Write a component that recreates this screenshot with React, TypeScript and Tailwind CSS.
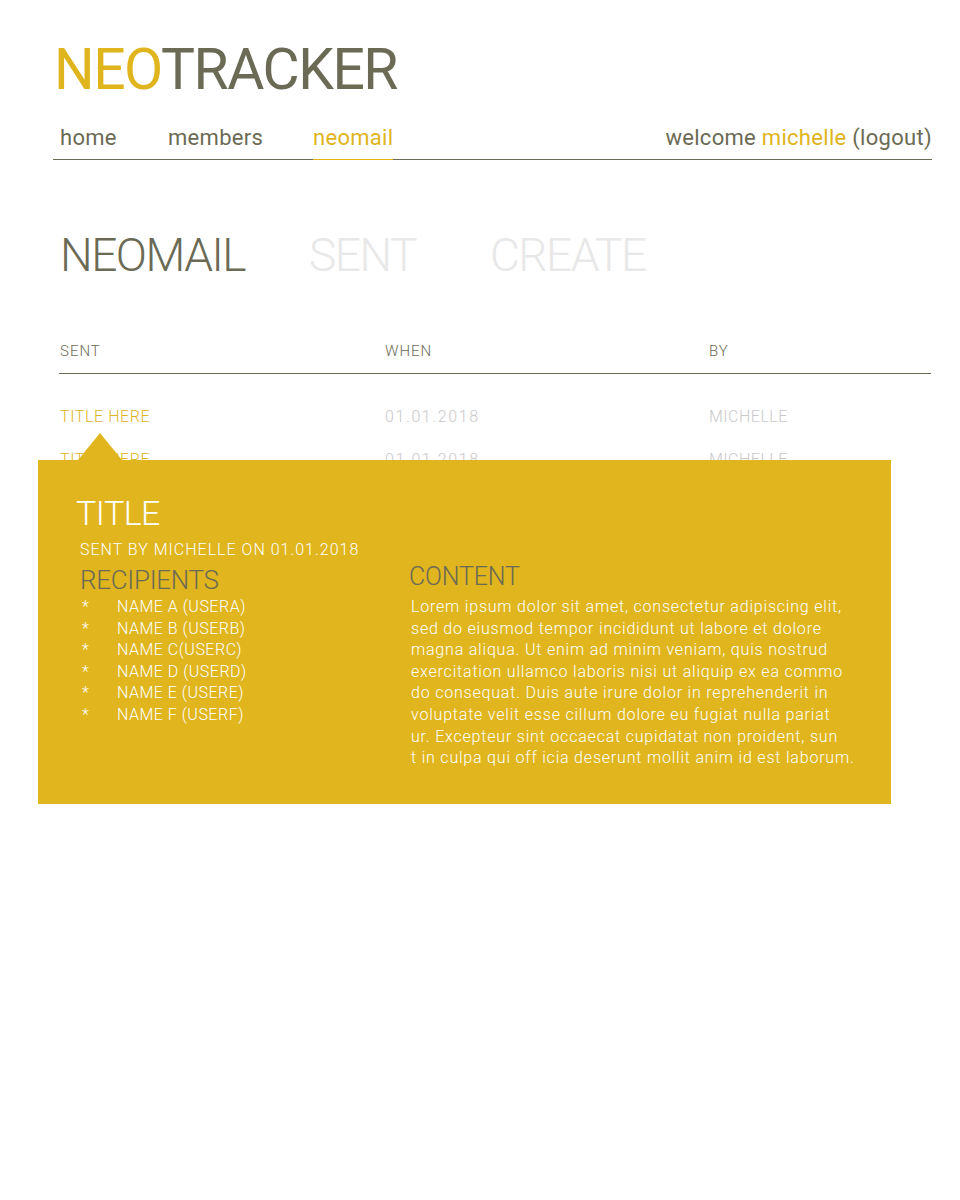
import React from "react";

const GOLD = "text-[#e0b41c]";

const rows = [
  { title: "TITLE HERE", when: "01.01.2018", by: "MICHELLE" },
  { title: "TITLE HERE", when: "01.01.2018", by: "MICHELLE" },
];

const recipients = [
  "NAME A (USERA)",
  "NAME B (USERB)",
  "NAME C(USERC)",
  "NAME D (USERD)",
  "NAME E (USERE)",
  "NAME F (USERF)",
];

const contentLines = [
  "Lorem ipsum dolor sit amet, consectetur adipiscing elit,",
  "sed do eiusmod tempor incididunt ut labore et dolore",
  "magna aliqua. Ut enim ad minim veniam, quis nostrud",
  "exercitation ullamco laboris nisi ut aliquip ex ea commo",
  "do consequat. Duis aute irure dolor in reprehenderit in",
  "voluptate velit esse cillum dolore eu fugiat nulla pariat",
  "ur. Excepteur sint occaecat cupidatat non proident, sun",
  "t in culpa qui off icia deserunt mollit anim id est laborum.",
];

function MailPopup() {
  return (
    <div className="absolute left-[-21px] top-[65px] w-[853px]">
      {/* pointer */}
      <div className="absolute left-[40px] top-[-27px] h-0 w-0 border-x-[22px] border-b-[27px] border-x-transparent border-b-[#e0b51e]" />
      <div className="bg-[#e0b51e] pb-[35px] pl-[38px] pt-[36px] text-white">
        <h2 className="text-[34px] font-light leading-none tracking-[-0.5px]">TITLE</h2>
        <p className="ml-[4px] mt-[12px] text-[16px] font-light leading-none tracking-[1px]">
          SENT BY MICHELLE ON 01.01.2018
        </p>
        <div className="mt-[9px] flex">
          <div className="ml-[4px] w-[330px]">
            <h3 className="text-[26px] font-light leading-none tracking-[-0.3px] text-[#6b6a55]">
              RECIPIENTS
            </h3>
            <ul className="mt-[3px] text-[16px] font-light leading-[21.6px] tracking-[0.5px]">
              {recipients.map((r) => (
                <li key={r} className="flex">
                  <span className="w-[37px] pl-[2px]">*</span>
                  <span>{r}</span>
                </li>
              ))}
            </ul>
          </div>
          <div className="-mt-[3px] -ml-[1px]">
            <h3 className="text-[25px] font-light leading-none tracking-[-0.2px] text-[#6b6a55]">
              CONTENT
            </h3>
            <div className="ml-[2px] mt-[7px] text-[16px] font-light leading-[21.6px] tracking-[0.8px]">
              {contentLines.map((l, i) => (
                <p key={i} className="whitespace-nowrap">
                  {l}
                </p>
              ))}
            </div>
          </div>
        </div>
      </div>
    </div>
  );
}

export default function App() {
  return (
    <div className="min-h-[1200px] bg-white font-['Roboto','Liberation_Sans',sans-serif] text-[#6b6a55]">
      <div className="ml-[53px] w-[879px] pt-[41px]">
        {/* logo */}
        <h1 className="ml-[1px] text-[57px] leading-none tracking-[-1.5px]">
          <span className={GOLD}>NEO</span>
          <span>TRACKER</span>
        </h1>

        {/* top nav */}
        <nav className="mt-[29px] flex items-end justify-between border-b border-[#6b6a55] text-[22px] leading-none tracking-[0.3px]">
          <div className="flex items-end pl-[7px]">
            <a className="-mb-px w-[108px] border-b border-transparent pb-[10px]">home</a>
            <a className="-mb-px w-[145px] border-b border-transparent pb-[10px]">members</a>
            <a className={`-mb-px border-b border-[#e0b41c] pb-[10px] ${GOLD}`}>neomail</a>
          </div>
          <div className="pb-[10px]">
            welcome <span className={GOLD}>michelle</span> (logout)
          </div>
        </nav>

        {/* tabs */}
        <div className="ml-[7px] mt-[72px] flex text-[46px] font-light leading-none tracking-[-1.5px]">
          <span className="w-[249px]">NEOMAIL</span>
          <span className="w-[181px] text-[#e8e8e8]">SENT</span>
          <span className="text-[#e8e8e8]">CREATE</span>
        </div>

        {/* table */}
        <div className="ml-[6px] mt-[66px] w-[872px]">
          <div className="flex border-b border-[#6b6a55] pb-[14px] pl-[1px] text-[15px] font-light leading-none tracking-[1px]">
            <span className="w-[325px]">SENT</span>
            <span className="w-[324px]">WHEN</span>
            <span>BY</span>
          </div>
          <div className="relative mt-[21px]">
            {rows.map((r, i) => (
              <div key={i} className="flex h-[43px] pl-[1px] text-[16px] font-light leading-[43px]">
                <span className={`w-[325px] tracking-[0.6px] ${GOLD}`}>{r.title}</span>
                <span className="w-[324px] tracking-[1.6px] text-[#c9c9c9]">{r.when}</span>
                <span className="tracking-[0.5px] text-[#c9c9c9]">{r.by}</span>
              </div>
            ))}
            <MailPopup />
          </div>
        </div>
      </div>
    </div>
  );
}
